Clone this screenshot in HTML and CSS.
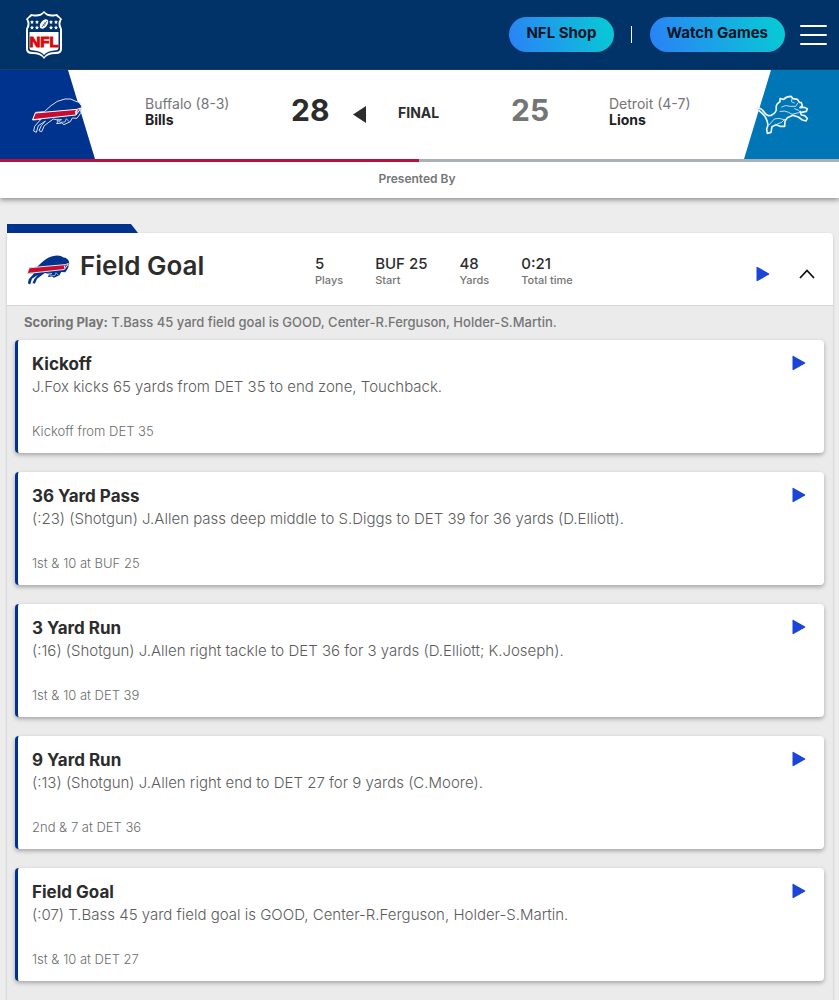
FILE: index.html
```html
<!DOCTYPE html>
<html lang="en">
<head>
<meta charset="utf-8">
<meta name="viewport" content="width=device-width, initial-scale=1">
<title>Bills at Lions - Play by play</title>
<link rel="stylesheet" href="styles.css">
</head>
<body>
<svg class="defs" aria-hidden="true">
  <symbol id="play" viewBox="0 0 14 16"><path d="M.5 1.600Q.5 .5 1.500 .9L13 7.400Q13.800 8 13 8.600L1.500 15.100Q.5 15.500 .5 14.400Z" fill="#1b45d8"/></symbol>
  <symbol id="bills" viewBox="33 33 156 108">
    <path d="M73 77 93 59Q110 43 135 39Q154 36 165 45Q179 46 184 59Q187 66 182 72Q185 80 178 87L171 97 157 96 151 107 132 116 125 111 110 113 115 104 108 101 100 99Q86 109 73 119L65 137 57 134 64 119 76 105 67 111 55 119 49 139 41 135 44 121 58 105 63 100 38 102 47 79Z"/>
    <path d="M46 81 171 70 182 66 177 75 168 87 38 101Z" fill="#c60c30" stroke="#fff" stroke-width="3"/>
    <path class="mark" d="M110 100 125 101 116 105 121 109 135 108 139 98 147 107"/>
    <path d="M166 76 172 72 168 86Z" fill="#fff"/>
  </symbol>
</svg>

<header class="site-header">
  <a class="brand" href="#" aria-label="NFL home">
    <svg viewBox="0 0 38 50" width="38" height="50" aria-hidden="true">
      <path d="M19 1Q23 6 32 4L37 9Q34 13 37 19V39Q37 44 31 44Q22 44 19 49Q16 44 7 44Q1 44 1 39V19Q4 13 1 9L6 4Q15 6 19 1Z" fill="#fff"/>
      <path d="M19 3Q23 8 31 6L35 9Q32 14 35 19V39Q35 42 30 42Q22 42 19 47Q16 42 8 42Q3 42 3 39V19Q6 14 3 9L7 6Q15 8 19 3Z" fill="#013369"/>
      <path d="M4.500 22H33.500V38Q33.500 40.500 29 40.500Q22 41 19 45Q16 41 9 40.500Q4.500 40.500 4.500 38Z" fill="#fff"/>
      <g fill="#fff"><path id="star" d="m7 10 .6 1.300 1.400.2-1 1 .2 1.400L7 13.200l-1.200.7.200-1.400-1-1 1.400-.2Z"/>
      <use href="#star" x="5"/><use href="#star" y="5.500"/><use href="#star" x="5" y="5.500"/><use href="#star" x="19"/><use href="#star" x="24"/><use href="#star" x="19" y="5.500"/><use href="#star" x="24" y="5.500"/></g>
      <ellipse cx="19" cy="14" rx="3.300" ry="5.500" transform="rotate(38 19 14)" fill="#fff"/>
      <path d="m17 17 5-6m-3.200 1.500 2 1.700m-3 0 2 1.700" stroke="#013369" stroke-width=".7"/>
      <text x="19" y="37" text-anchor="middle" class="brand-text">NFL</text>
    </svg>
  </a>
  <nav class="site-nav">
    <a class="pill" href="#">NFL Shop</a>
    <span class="divider"></span>
    <a class="pill" href="#">Watch Games</a>
    <button class="menu" type="button" aria-label="Menu"><span></span><span></span><span></span></button>
  </nav>
</header>

<section class="scoreboard">
  <div class="score-row">
    <div class="badge badge-away">
      <svg class="bills-outline" width="52" height="36" aria-label="Bills"><use href="#bills"/></svg>
    </div>
    <div class="team"><span>Buffalo (8-3)</span><strong>Bills</strong></div>
    <div class="score">28</div>
    <svg class="winner" viewBox="0 0 13 17" width="13" height="17" aria-label="Winner"><path d="M13 0V17L0 8.500Z" fill="#2c2c2c"/></svg>
    <div class="status">FINAL</div>
    <div class="score score-lost">25</div>
    <div class="team"><span>Detroit (4-7)</span><strong>Lions</strong></div>
    <div class="badge badge-home">
      <svg viewBox="15 27 162 123" width="54" height="41" aria-label="Lions">
        <g fill="#0076b6" stroke="#e9f3f9" stroke-width="5" stroke-linejoin="round" stroke-linecap="round">
          <path d="M19 71Q30 66 39 77Q47 89 55 92L64 91Q79 83 79 72Q76 57 90 50V41L101 43Q109 34 123 34L129 41 142 43 148 52 154 53 157 62 150 68 162 67 172 71 169 79 155 82 150 80 154 90 164 92 172 100 168 108 157 105 145 96 129 91 112 98 105 108 104 124 90 124 78 119 66 125 63 142 52 145 50 133 54 120 51 107Q45 91 35 84Q27 75 19 71Z"/>
          <path d="M58 119 73 102 87 100 102 104M80 118 95 112 104 103M90 79Q105 76 116 82L126 88 146 83 152 78M95 66Q107 58 120 64L137 64 143 55M126 42 124 50 133 54M134 71 146 76" fill="none" stroke-width="2.500"/>
        </g>
      </svg>
    </div>
  </div>
  <div class="possession"></div>
  <p class="presented">Presented By</p>
</section>

<main class="drive">
  <div class="drive-tab"></div>
  <div class="drive-panel">
  <header class="drive-header">
    <svg class="bills-solid" width="46" height="31" aria-label="Bills"><use href="#bills"/></svg>
    <h1>Field Goal</h1>
    <dl class="stats">
      <div><dd>5</dd><dt>Plays</dt></div>
      <div><dd>BUF 25</dd><dt>Start</dt></div>
      <div><dd>48</dd><dt>Yards</dt></div>
      <div><dd>0:21</dd><dt>Total time</dt></div>
    </dl>
    <button class="icon-button" type="button" aria-label="Play drive"><svg width="16" height="16"><use href="#play"/></svg></button>
    <button class="icon-button toggle" type="button" aria-label="Collapse drive"><svg viewBox="0 0 16 10" width="16" height="10"><path d="M1 9 8 1.500 15 9" fill="none" stroke="#111" stroke-width="1.800"/></svg></button>
  </header>
  <p class="summary"><strong>Scoring Play:</strong> T.Bass 45 yard field goal is GOOD, Center-R.Ferguson, Holder-S.Martin.</p>
  <div class="plays">
    <article class="play">
      <div><h2>Kickoff</h2><p>J.Fox kicks 65 yards from DET 35 to end zone, Touchback.</p><small>Kickoff from DET 35</small></div>
      <button class="icon-button" type="button" aria-label="Watch play"><svg width="16" height="16"><use href="#play"/></svg></button>
    </article>
    <article class="play">
      <div><h2>36 Yard Pass</h2><p>(:23) (Shotgun) J.Allen pass deep middle to S.Diggs to DET 39 for 36 yards (D.Elliott).</p><small>1st &amp; 10 at BUF 25</small></div>
      <button class="icon-button" type="button" aria-label="Watch play"><svg width="16" height="16"><use href="#play"/></svg></button>
    </article>
    <article class="play">
      <div><h2>3 Yard Run</h2><p>(:16) (Shotgun) J.Allen right tackle to DET 36 for 3 yards (D.Elliott; K.Joseph).</p><small>1st &amp; 10 at DET 39</small></div>
      <button class="icon-button" type="button" aria-label="Watch play"><svg width="16" height="16"><use href="#play"/></svg></button>
    </article>
    <article class="play">
      <div><h2>9 Yard Run</h2><p>(:13) (Shotgun) J.Allen right end to DET 27 for 9 yards (C.Moore).</p><small>2nd &amp; 7 at DET 36</small></div>
      <button class="icon-button" type="button" aria-label="Watch play"><svg width="16" height="16"><use href="#play"/></svg></button>
    </article>
    <article class="play">
      <div><h2>Field Goal</h2><p>(:07) T.Bass 45 yard field goal is GOOD, Center-R.Ferguson, Holder-S.Martin.</p><small>1st &amp; 10 at DET 27</small></div>
      <button class="icon-button" type="button" aria-label="Watch play"><svg width="16" height="16"><use href="#play"/></svg></button>
    </article>
  </div>
  </div>
</main>
</body>
</html>
```
FILE: styles.css
```css
* { box-sizing: border-box; }
body { margin: 0; background: #ededed; color: #2c2c2c; font-family: Inter, "Liberation Sans", sans-serif; }
h1, h2, p, dl, dd { margin: 0; }
button { border: 0; padding: 0; background: none; cursor: pointer; }
svg { display: block; }
.defs { position: absolute; width: 0; height: 0; }

.site-header { display: flex; align-items: center; justify-content: space-between; height: 70px; padding: 0 12px 0 25px; background: #013369; border-bottom: 1px solid #1b3f70; }
.brand-text { font: bold 15px "Liberation Sans", sans-serif; fill: #d50a0a; stroke: #d50a0a; stroke-width: 1px; }
.site-nav { display: flex; align-items: center; }
.pill { height: 35px; padding: 0 17px; border-radius: 18px; background: linear-gradient(70deg, #2b80f7, #06cdd3); color: #061426; font-size: 15px; font-weight: 700; line-height: 32px; text-decoration: none; white-space: nowrap; }
.divider { width: 1px; height: 17px; margin: 0 18px 0 17px; background: #fff; }
.menu { display: flex; flex-direction: column; gap: 7px; width: 27px; margin-left: 15px; }
.menu span { height: 2px; border-radius: 1px; background: #fff; }

.scoreboard { background: #fff; box-shadow: 0 2px 5px rgba(0, 0, 0, .4); }
.score-row { display: grid; grid-template-columns: 145fr 146fr 62fr 45fr 113fr 98fr 135fr 95fr; height: 89px; }
.badge { position: relative; display: flex; align-items: center; height: 100%; width: 95px; }
.badge::before { content: ""; position: absolute; inset: 0; }
.badge-away { padding-left: 31px; }
.badge-away::before { background: #00338d; clip-path: polygon(0 0, 68px 0, 95px 100%, 0 100%); }
.badge-home { padding-left: 11px; }
.badge-home::before { background: #0076b6; clip-path: polygon(27px 0, 100% 0, 100% 100%, 0 100%); }
.badge svg { position: relative; }
.team { padding-top: 26px; font-size: 14px; line-height: 16px; color: #757575; white-space: nowrap; }
.team span, .team strong { display: block; }
.team strong { color: #222; }
.score { padding-top: 22px; font-size: 30px; line-height: 36px; font-weight: 700; }
.score-lost { color: #757575; }
.winner { margin-top: 36px; }
.status { padding-top: 33px; font-size: 14px; line-height: 20px; font-weight: 700; }
.possession { height: 3px; background: linear-gradient(90deg, #b5123c 50%, #a9b0b7 50%); }
.presented { padding: 0 5px 2px 0; font-size: 12px; line-height: 34px; font-weight: 600; text-align: center; color: #757575; }
.bills-outline { fill: #00338d; stroke: #dce6f5; stroke-width: 3; }
.bills-solid { flex: none; fill: #00338d; stroke: none; }
.mark { fill: none; stroke: #fff; stroke-width: 2; }

.drive { margin: 26px 6px 0 7px; }
.drive-tab { width: 131px; height: 9px; background: #00338d; clip-path: polygon(0 0, 124px 0, 100% 100%, 0 100%); }
.drive-panel { background: #ebebeb; border-radius: 0 4px 0 0; box-shadow: 0 1px 3px rgba(0, 0, 0, .2); }
.drive-header { display: flex; align-items: center; height: 73px; padding: 0 18px; background: #fff; border-bottom: 1px solid #d6d6d6; border-radius: 0 4px 0 0; }
.drive-header h1 { flex: none; width: 244px; padding-left: 9px; padding-bottom: 6px; font-size: 26px; line-height: 32px; font-weight: 600; }
.stats { display: flex; gap: 32px; flex: 1; padding-top: 4px; white-space: nowrap; }
.stats div { display: flex; flex-direction: column; }
.stats dd { font-size: 15px; line-height: 18px; font-weight: 500; }
.stats dt { font-size: 11px; line-height: 14px; font-weight: 500; color: #757575; }
.icon-button { flex: none; width: 16px; }
.drive-header .icon-button { padding-top: 10px; }
.toggle { margin-left: 28px; }
.summary { padding: 6px 17px 8px; font-size: 13px; line-height: 20px; font-weight: 500; color: #757575; }
.plays { display: flex; flex-direction: column; gap: 19px; padding: 0 9px 19px 8px; }
.play { display: flex; align-items: flex-start; justify-content: space-between; padding: 12px 17px 12px 14px; background: #fff; border-left: 3px solid #00338d; border-radius: 4px; box-shadow: 0 2px 4px rgba(0, 0, 0, .3); }
.play h2 { font-size: 17px; line-height: 24px; font-weight: 700; }
.play p { font-size: 15px; line-height: 22px; font-weight: 300; color: #5c5c5c; }
.play small { display: block; margin-top: 23px; font-size: 13px; line-height: 20px; font-weight: 300; color: #6c6c6c; }
.play .icon-button { padding-top: 3px; }
```
